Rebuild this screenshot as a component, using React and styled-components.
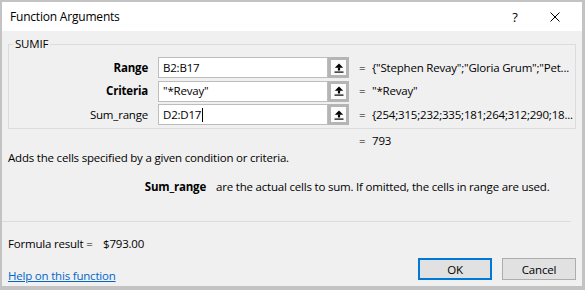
import React from 'react';
import styled, { createGlobalStyle } from 'styled-components';

const Global = createGlobalStyle`
  html, body { margin: 0; padding: 0; background: #c3c3c3; }
  body {
    width: 585px; height: 290px; overflow: hidden;
    font-family: "Open Sans", "Noto Sans", sans-serif;
    font-size: 11.5px; letter-spacing: -0.2px; color: #000;
  }
  * { box-sizing: border-box; }
`;

const Window = styled.div`
  margin: 2px 0 0 2px;
  width: 580px;
  height: 284px;
  background: #f0f0f0;
  display: flex;
  flex-direction: column;
`;

const TitleBar = styled.div`
  height: 29px;
  background: #fff;
  display: flex;
  align-items: center;
  padding: 0 7px 0 8px;
`;

const Title = styled.div`
  flex: 1;
  font-size: 12px;
  line-height: 16px;
`;

const TitleButton = styled.div`
  width: 40px;
  height: 29px;
  display: flex;
  align-items: center;
  justify-content: center;
  font-size: 13px;
`;

const Body = styled.div`
  flex: 1;
  display: flex;
  flex-direction: column;
  padding: 0 6px;
`;

const GroupBox = styled.div`
  position: relative;
  margin-top: 13px;
  border: 1px solid #dcdcdc;
  padding: 12px 0 3px 0;
  display: flex;
  flex-direction: column;
  gap: 2.5px;
`;

const Legend = styled.div`
  position: absolute;
  top: -9px;
  left: 4px;
  padding: 0 2px;
  line-height: 16px;
  background: #f0f0f0;
`;

const ArgRow = styled.div`
  display: grid;
  grid-template-columns: ${p => p.$first || 149}px 170px 21px 23px 1fr;
  height: ${p => p.$h || 21}px;
  align-items: center;
  line-height: 16px;
`;

const ArgLabel = styled.div`
  text-align: right;
  padding-right: 10px;
  font-weight: ${p => (p.$bold ? 700 : 400)};
  white-space: nowrap;
`;

const InputField = styled.div`
  height: 21px;
  border: 1px solid #bdbdbd;
  background: #fff;
  padding-left: 4px;
  display: flex;
  align-items: center;
  white-space: nowrap;
`;

const Caret = styled.span`
  display: inline-block;
  width: 1px;
  height: 14px;
  background: #000;
  margin-left: 1px;
`;

const CollapseButton = styled.div`
  width: 21px;
  height: 21px;
  border: 3px solid #b5b5b5;
  background: #fbfbfb;
  display: flex;
  align-items: center;
  justify-content: center;
`;

const Eq = styled.div`
  padding-left: 10px;
`;

const Value = styled.div`
  white-space: nowrap;
  overflow: hidden;
`;

const ResultRow = styled(ArgRow)`
  margin-top: 4px;
`;

const Summary = styled.div`
  line-height: 16px;
  margin-top: 1px;
`;

const ArgHelp = styled.div`
  display: flex;
  line-height: 16px;
  margin-top: 12.5px;
`;

const ArgHelpName = styled.div`
  width: 198px;
  text-align: right;
  font-weight: 700;
`;

const ArgHelpText = styled.div`
  margin-left: 10px;
  white-space: nowrap;
`;

const Separator = styled.div`
  height: 1px;
  background: #dcdcdc;
  margin: 26.5px 5px 0 -6px;
`;

const FormulaRow = styled.div`
  display: flex;
  line-height: 16px;
  margin-top: 14px;
`;

const FormulaLabel = styled.div`
  width: 95px;
`;

const Footer = styled.div`
  display: flex;
  align-items: flex-start;
  margin-top: 6px;
`;

const HelpLink = styled.a`
  margin-top: 10px;
  line-height: 16px;
  color: #0066cc;
  text-decoration: underline;
  cursor: pointer;
`;

const ButtonGroup = styled.div`
  margin-left: auto;
  display: flex;
  gap: 10px;
`;

const DialogButton = styled.button`
  width: 74px;
  height: 22px;
  font-family: inherit;
  font-size: 11.5px;
  letter-spacing: -0.2px;
  color: #000;
  background: #e1e1e1;
  border: ${p => (p.$default ? '2px solid #0078d7' : '1px solid #adadad')};
  padding: 0;
`;

const UpIcon = () => (
  <svg width="10" height="10" viewBox="0 0 10 10">
    <polygon points="5,0.5 0.8,4.8 9.2,4.8" fill="#000" />
    <rect x="3.9" y="4.5" width="2.2" height="3" fill="#000" />
    <rect x="0.5" y="8.5" width="9" height="1.2" fill="#000" />
  </svg>
);

const CloseIcon = () => (
  <svg width="10" height="10" viewBox="0 0 10 10">
    <path d="M0.5 0.5 L9.5 9.5 M9.5 0.5 L0.5 9.5" stroke="#000" strokeWidth="1" fill="none" />
  </svg>
);

const args = [
  { name: 'Range', bold: true, input: 'B2:B17', value: '{"Stephen Revay";"Gloria Grum";"Pet...' },
  { name: 'Criteria', bold: true, input: '"*Revay"', value: '"*Revay"' },
  { name: 'Sum_range', bold: false, input: 'D2:D17', value: '{254;315;232;335;181;264;312;290;18...', caret: true },
];

export default function App() {
  return (
    <>
      <Global />
      <Window>
        <TitleBar>
          <Title>Function Arguments</Title>
          <TitleButton>?</TitleButton>
          <TitleButton><CloseIcon /></TitleButton>
        </TitleBar>
        <Body>
          <GroupBox>
            <Legend>SUMIF</Legend>
            {args.map(a => (
              <ArgRow key={a.name}>
                <ArgLabel $bold={a.bold}>{a.name}</ArgLabel>
                <InputField>
                  {a.input}
                  {a.caret && <Caret />}
                </InputField>
                <CollapseButton><UpIcon /></CollapseButton>
                <Eq>=</Eq>
                <Value>{a.value}</Value>
              </ArgRow>
            ))}
          </GroupBox>
          <ResultRow $first={150} $h={16}>
            <span />
            <span />
            <span />
            <Eq>=</Eq>
            <Value>793</Value>
          </ResultRow>
          <Summary>Adds the cells specified by a given condition or criteria.</Summary>
          <ArgHelp>
            <ArgHelpName>Sum_range</ArgHelpName>
            <ArgHelpText>are the actual cells to sum. If omitted, the cells in range are used.</ArgHelpText>
          </ArgHelp>
          <Separator />
          <FormulaRow>
            <FormulaLabel>Formula result =</FormulaLabel>
            <span>$793.00</span>
          </FormulaRow>
          <Footer>
            <HelpLink>Help on this function</HelpLink>
            <ButtonGroup>
              <DialogButton $default>OK</DialogButton>
              <DialogButton>Cancel</DialogButton>
            </ButtonGroup>
          </Footer>
        </Body>
      </Window>
    </>
  );
}
